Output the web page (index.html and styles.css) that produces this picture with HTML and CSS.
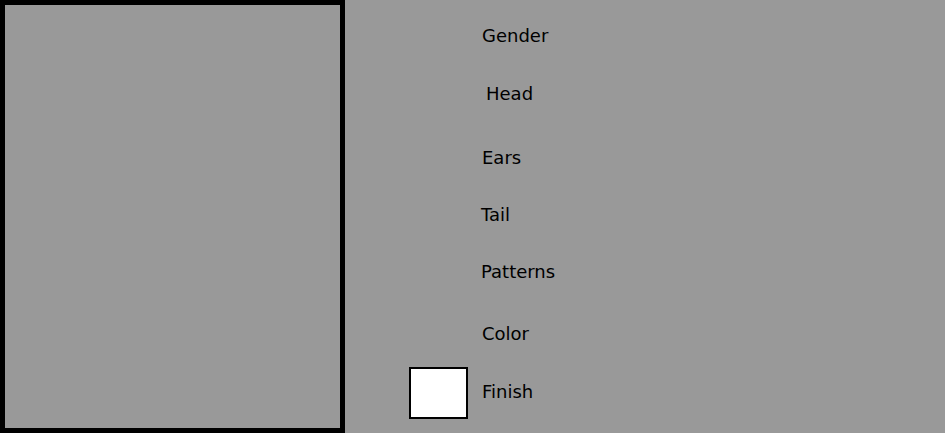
FILE: index.html
```html
<!DOCTYPE html>
<html>
<head>
<meta charset="utf-8">
<link rel="stylesheet" href="styles.css">
</head>
<body>
<div class="app">
  <div class="preview"></div>
  <div class="menu">
    <div class="row r-gender"><span class="swatch-slot"></span><span class="label">Gender</span></div>
    <div class="row r-head"><span class="swatch-slot"></span><span class="label shift-right">Head</span></div>
    <div class="row r-ears"><span class="swatch-slot"></span><span class="label">Ears</span></div>
    <div class="row r-tail"><span class="swatch-slot"></span><span class="label shift-left">Tail</span></div>
    <div class="row r-patterns"><span class="swatch-slot"></span><span class="label shift-left">Patterns</span></div>
    <div class="row r-color"><span class="swatch-slot"></span><span class="label">Color</span></div>
    <div class="row r-finish"><span class="swatch"></span><span class="label raise">Finish</span></div>
  </div>
</div>
</body>
</html>
```
FILE: styles.css
```css
html, body {
  margin: 0;
  padding: 0;
  background: #999999;
}
body {
  font-family: "DejaVu Sans", sans-serif;
  font-size: 18px;
  color: #000;
}
.app {
  display: flex;
  width: 945px;
  height: 433px;
}
.preview {
  box-sizing: border-box;
  width: 345px;
  height: 433px;
  border: 5px solid #000;
  flex: none;
}
.menu {
  display: flex;
  flex-direction: column;
  padding-left: 64px;
}
.row {
  display: flex;
  align-items: center;
  gap: 14px;
  line-height: 20px;
}
.swatch-slot {
  width: 59px;
  flex: none;
}
.swatch {
  box-sizing: border-box;
  width: 59px;
  height: 52px;
  border: 2px solid #000;
  background: #fff;
  flex: none;
}
.label {
  display: block;
}
.raise { margin-bottom: 2px; }
.shift-right { padding-left: 4px; }
.shift-left { margin-left: -1px; }
.r-gender { margin-top: 26px; }
.r-head { margin-top: 38px; }
.r-ears { margin-top: 44px; }
.r-tail { margin-top: 37px; }
.r-patterns { margin-top: 37px; }
.r-color { margin-top: 42px; }
.r-finish { margin-top: 23px; }
```
